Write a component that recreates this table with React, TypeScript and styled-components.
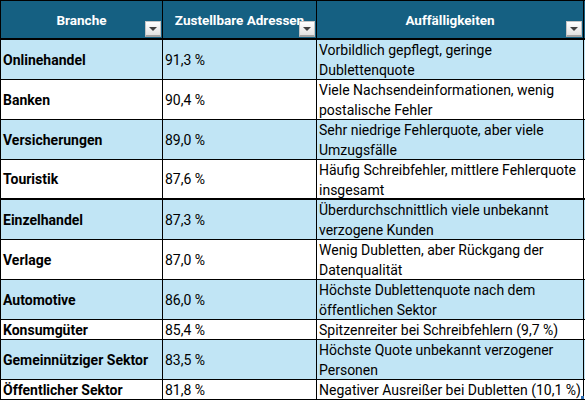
import styled, { createGlobalStyle } from "styled-components"

const GlobalStyle = createGlobalStyle`
  html, body {
    margin: 0;
    padding: 0;
    background: #ffffff;
  }
  body {
    font-family: Roboto, "Liberation Sans", sans-serif;
  }
`

const COLORS = {
  header: "#156082",
  band: "#c1e5f5",
  line: "#000000",
}

type Row = {
  branche: string
  rate: string
  note: string
  tall: boolean
}

const ROWS: Row[] = [
  { branche: "Onlinehandel", rate: "91,3 %", note: "Vorbildlich gepflegt, geringe Dublettenquote", tall: true },
  { branche: "Banken", rate: "90,4 %", note: "Viele Nachsendeinformationen, wenig postalische Fehler", tall: true },
  { branche: "Versicherungen", rate: "89,0 %", note: "Sehr niedrige Fehlerquote, aber viele Umzugsfälle", tall: true },
  { branche: "Touristik", rate: "87,6 %", note: "Häufig Schreibfehler, mittlere Fehlerquote insgesamt", tall: true },
  { branche: "Einzelhandel", rate: "87,3 %", note: "Überdurchschnittlich viele unbekannt verzogene Kunden", tall: true },
  { branche: "Verlage", rate: "87,0 %", note: "Wenig Dubletten, aber Rückgang der Datenqualität", tall: true },
  { branche: "Automotive", rate: "86,0 %", note: "Höchste Dublettenquote nach dem öffentlichen Sektor", tall: true },
  { branche: "Konsumgüter", rate: "85,4 %", note: "Spitzenreiter bei Schreibfehlern (9,7 %)", tall: false },
  { branche: "Gemeinnütziger Sektor", rate: "83,5 %", note: "Höchste Quote unbekannt verzogener Personen", tall: true },
  { branche: "Öffentlicher Sektor", rate: "81,8 %", note: "Negativer Ausreißer bei Dubletten (10,1 %)", tall: false },
]

const Sheet = styled.div`
  position: relative;
  width: 584px;
  border-left: 1px solid ${COLORS.line};
  font-size: 14px;
  color: #000;
`

const GridRow = styled.div<{ $height: number; $band?: boolean; $thick?: boolean }>`
  display: grid;
  grid-template-columns: 162px 154px 267px;
  height: ${p => p.$height}px;
  box-sizing: border-box;
  background: ${p => (p.$band ? COLORS.band : "#ffffff")};
  border-bottom: ${p => (p.$thick ? 2 : 1)}px solid ${COLORS.line};
`

const HeaderRow = styled(GridRow)`
  background: ${COLORS.header};
  color: #ffffff;
  border-top: 1px solid ${COLORS.line};
`

const HeadCell = styled.div`
  position: relative;
  display: flex;
  align-items: center;
  justify-content: center;
  font-weight: 700;
  font-size: 13.5px;
  border-right: 1px solid ${COLORS.line};
  white-space: nowrap;
`

const FilterButton = styled.span`
  position: absolute;
  right: 1px;
  bottom: 1px;
  width: 16px;
  height: 16px;
  box-sizing: border-box;
  background: linear-gradient(#ffffff, #e2e2e2);
  border: 1px solid #c4c4c4;
  border-bottom: 2px solid #a4a4a4;
  display: flex;
  align-items: center;
  justify-content: center;

  &::after {
    content: "";
    border-left: 4px solid transparent;
    border-right: 4px solid transparent;
    border-top: 4px solid #404040;
  }
`

const Cell = styled.div<{ $bold?: boolean }>`
  display: flex;
  align-items: center;
  padding: 0 2px;
  border-right: 1px solid ${COLORS.line};
  font-weight: ${p => (p.$bold ? 700 : 400)};
  line-height: 20px;
  white-space: nowrap;
  overflow: hidden;
`

const NoteCell = styled.div`
  padding: 0 2px;
  border-right: 1px solid ${COLORS.line};
  line-height: 20px;
  overflow: hidden;
`

const Handle = styled.span`
  position: absolute;
  right: 1px;
  bottom: 1px;
  width: 3px;
  height: 3px;
  background: #2f6fb5;
`

const columns = ["Branche", "Zustellbare Adressen", "Auffälligkeiten"]

export default function App() {
  return (
    <>
      <GlobalStyle />
      <Sheet>
        <HeaderRow $height={40} $thick>
          {columns.map(c => (
            <HeadCell key={c}>
              {c}
              <FilterButton />
            </HeadCell>
          ))}
        </HeaderRow>
        {ROWS.map((r, i) => (
          <GridRow key={r.branche} $height={r.tall ? 40 : 20} $band={i % 2 === 0} $thick={i === 3}>
            <Cell $bold>{r.branche}</Cell>
            <Cell>{r.rate}</Cell>
            <NoteCell>{r.note}</NoteCell>
          </GridRow>
        ))}
        <Handle />
      </Sheet>
    </>
  )
}
